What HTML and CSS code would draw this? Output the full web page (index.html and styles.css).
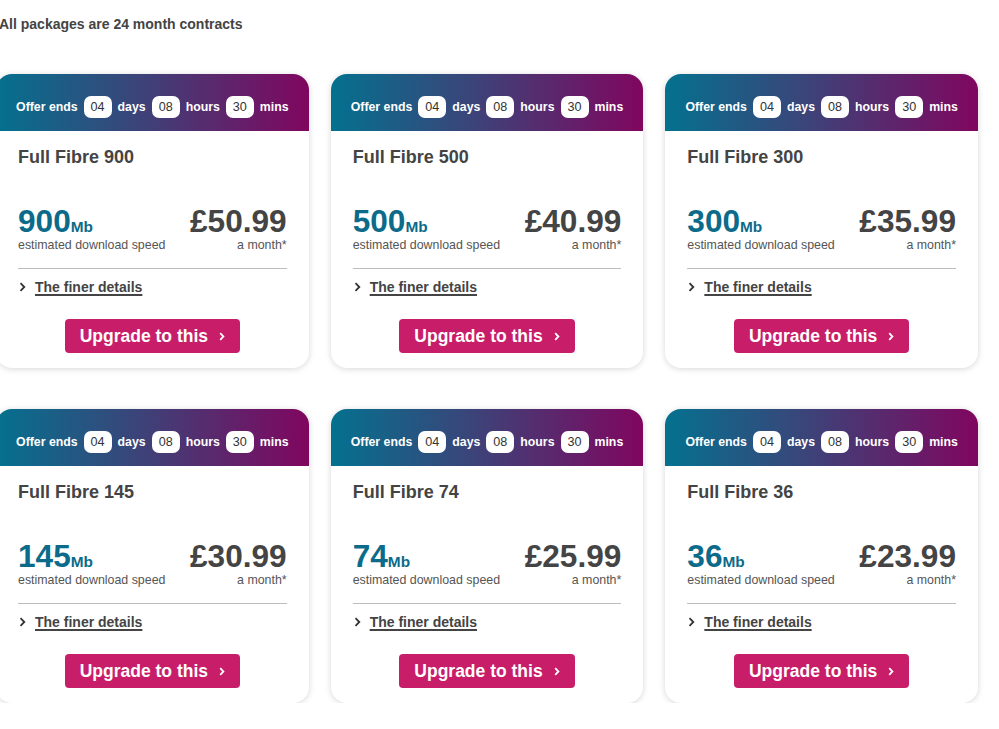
FILE: index.html
```html
<!DOCTYPE html>
<html lang="en">
<head>
<meta charset="utf-8">
<title>Full Fibre packages</title>
<link rel="stylesheet" href="styles.css">
</head>
<body>
<main class="page">
  <p class="intro">All packages are 24 month contracts</p>
  <div class="grid">

    <article class="card">
      <div class="offer"><span>Offer ends</span><span class="num">04</span><span>days</span><span class="num">08</span><span>hours</span><span class="num">30</span><span>mins</span></div>
      <div class="body">
        <h2 class="title">Full Fibre 900</h2>
        <div class="figures">
          <div class="speed"><div class="big">900<span class="unit">Mb</span></div><div class="sub">estimated download speed</div></div>
          <div class="price"><div class="big">£50.99</div><div class="sub">a month*</div></div>
        </div>
        <div class="divider"></div>
        <div class="details"><svg width="7" height="10" viewBox="0 0 7 10"><path d="M1.5 1.2 L5.3 5 L1.5 8.8" fill="none" stroke="#333" stroke-width="1.8"/></svg><a href="#">The finer details</a></div>
        <div class="btn-row"><button class="btn">Upgrade to this<svg width="6" height="9" viewBox="0 0 6 9"><path d="M1.2 1.2 L4.4 4.5 L1.2 7.8" fill="none" stroke="#fff" stroke-width="1.8"/></svg></button></div>
      </div>
    </article>

    <article class="card">
      <div class="offer"><span>Offer ends</span><span class="num">04</span><span>days</span><span class="num">08</span><span>hours</span><span class="num">30</span><span>mins</span></div>
      <div class="body">
        <h2 class="title">Full Fibre 500</h2>
        <div class="figures">
          <div class="speed"><div class="big">500<span class="unit">Mb</span></div><div class="sub">estimated download speed</div></div>
          <div class="price"><div class="big">£40.99</div><div class="sub">a month*</div></div>
        </div>
        <div class="divider"></div>
        <div class="details"><svg width="7" height="10" viewBox="0 0 7 10"><path d="M1.5 1.2 L5.3 5 L1.5 8.8" fill="none" stroke="#333" stroke-width="1.8"/></svg><a href="#">The finer details</a></div>
        <div class="btn-row"><button class="btn">Upgrade to this<svg width="6" height="9" viewBox="0 0 6 9"><path d="M1.2 1.2 L4.4 4.5 L1.2 7.8" fill="none" stroke="#fff" stroke-width="1.8"/></svg></button></div>
      </div>
    </article>

    <article class="card">
      <div class="offer"><span>Offer ends</span><span class="num">04</span><span>days</span><span class="num">08</span><span>hours</span><span class="num">30</span><span>mins</span></div>
      <div class="body">
        <h2 class="title">Full Fibre 300</h2>
        <div class="figures">
          <div class="speed"><div class="big">300<span class="unit">Mb</span></div><div class="sub">estimated download speed</div></div>
          <div class="price"><div class="big">£35.99</div><div class="sub">a month*</div></div>
        </div>
        <div class="divider"></div>
        <div class="details"><svg width="7" height="10" viewBox="0 0 7 10"><path d="M1.5 1.2 L5.3 5 L1.5 8.8" fill="none" stroke="#333" stroke-width="1.8"/></svg><a href="#">The finer details</a></div>
        <div class="btn-row"><button class="btn">Upgrade to this<svg width="6" height="9" viewBox="0 0 6 9"><path d="M1.2 1.2 L4.4 4.5 L1.2 7.8" fill="none" stroke="#fff" stroke-width="1.8"/></svg></button></div>
      </div>
    </article>

    <article class="card">
      <div class="offer"><span>Offer ends</span><span class="num">04</span><span>days</span><span class="num">08</span><span>hours</span><span class="num">30</span><span>mins</span></div>
      <div class="body">
        <h2 class="title">Full Fibre 145</h2>
        <div class="figures">
          <div class="speed"><div class="big">145<span class="unit">Mb</span></div><div class="sub">estimated download speed</div></div>
          <div class="price"><div class="big">£30.99</div><div class="sub">a month*</div></div>
        </div>
        <div class="divider"></div>
        <div class="details"><svg width="7" height="10" viewBox="0 0 7 10"><path d="M1.5 1.2 L5.3 5 L1.5 8.8" fill="none" stroke="#333" stroke-width="1.8"/></svg><a href="#">The finer details</a></div>
        <div class="btn-row"><button class="btn">Upgrade to this<svg width="6" height="9" viewBox="0 0 6 9"><path d="M1.2 1.2 L4.4 4.5 L1.2 7.8" fill="none" stroke="#fff" stroke-width="1.8"/></svg></button></div>
      </div>
    </article>

    <article class="card">
      <div class="offer"><span>Offer ends</span><span class="num">04</span><span>days</span><span class="num">08</span><span>hours</span><span class="num">30</span><span>mins</span></div>
      <div class="body">
        <h2 class="title">Full Fibre 74</h2>
        <div class="figures">
          <div class="speed"><div class="big">74<span class="unit">Mb</span></div><div class="sub">estimated download speed</div></div>
          <div class="price"><div class="big">£25.99</div><div class="sub">a month*</div></div>
        </div>
        <div class="divider"></div>
        <div class="details"><svg width="7" height="10" viewBox="0 0 7 10"><path d="M1.5 1.2 L5.3 5 L1.5 8.8" fill="none" stroke="#333" stroke-width="1.8"/></svg><a href="#">The finer details</a></div>
        <div class="btn-row"><button class="btn">Upgrade to this<svg width="6" height="9" viewBox="0 0 6 9"><path d="M1.2 1.2 L4.4 4.5 L1.2 7.8" fill="none" stroke="#fff" stroke-width="1.8"/></svg></button></div>
      </div>
    </article>

    <article class="card">
      <div class="offer"><span>Offer ends</span><span class="num">04</span><span>days</span><span class="num">08</span><span>hours</span><span class="num">30</span><span>mins</span></div>
      <div class="body">
        <h2 class="title">Full Fibre 36</h2>
        <div class="figures">
          <div class="speed"><div class="big">36<span class="unit">Mb</span></div><div class="sub">estimated download speed</div></div>
          <div class="price"><div class="big">£23.99</div><div class="sub">a month*</div></div>
        </div>
        <div class="divider"></div>
        <div class="details"><svg width="7" height="10" viewBox="0 0 7 10"><path d="M1.5 1.2 L5.3 5 L1.5 8.8" fill="none" stroke="#333" stroke-width="1.8"/></svg><a href="#">The finer details</a></div>
        <div class="btn-row"><button class="btn">Upgrade to this<svg width="6" height="9" viewBox="0 0 6 9"><path d="M1.2 1.2 L4.4 4.5 L1.2 7.8" fill="none" stroke="#fff" stroke-width="1.8"/></svg></button></div>
      </div>
    </article>

  </div>
</main>
</body>
</html>
```

FILE: styles.css
```css
body {
  margin: 0;
  background: #fff;
  color: #444;
  font-family: "Liberation Sans", Arial, sans-serif;
}

.page {
  margin-left: -4px;
  width: 982px;
  padding-top: 15px;
}

.intro {
  margin: 0 0 41px 3px;
  font-size: 14px;
  line-height: 18px;
  font-weight: bold;
  color: #444;
}

.grid {
  display: grid;
  grid-template-columns: repeat(3, 1fr);
  column-gap: 22px;
  row-gap: 41px;
}

.card {
  background: #fff;
  border-radius: 16px;
  overflow: hidden;
  box-shadow: 0 1px 6px rgba(0, 0, 0, 0.16);
}

.offer {
  display: flex;
  justify-content: center;
  align-items: center;
  gap: 6px;
  padding: 22px 10px 13px;
  background: linear-gradient(90deg, #04718f 0%, #3b4479 45%, #80065f 100%);
  color: #fff;
  font-weight: bold;
  font-size: 12.3px;
}

.num {
  background: #fff;
  color: #333;
  font-weight: normal;
  font-size: 12.6px;
  height: 22px;
  line-height: 22px;
  padding: 0 7px;
  border-radius: 7px;
}

.body {
  padding: 15px 22px 15px;
}

.title {
  margin: 0;
  font-size: 18px;
  line-height: 22px;
  font-weight: bold;
  color: #444;
}

.figures {
  display: flex;
  justify-content: space-between;
  margin-top: 37px;
}

.big {
  font-size: 31.6px;
  line-height: 32px;
  height: 32px;
  font-weight: bold;
  color: #444;
  white-space: nowrap;
}

.speed .big {
  color: #0c6b8a;
}

.unit {
  font-size: 15.4px;
  line-height: 1;
}

.sub {
  font-size: 12.4px;
  line-height: 15px;
  margin-top: 1px;
  color: #555;
}

.price {
  text-align: right;
}

.divider {
  margin-top: 15px;
  border-top: 1px solid #bdbdbd;
}

.details {
  display: flex;
  align-items: center;
  gap: 9px;
  margin-top: 9px;
  font-size: 14px;
  line-height: 18px;
  font-weight: bold;
}

.details svg {
  margin-left: 1px;
}

.details a {
  color: #444;
  text-decoration: underline;
  text-decoration-thickness: 2px;
  text-underline-offset: 2px;
}

.btn-row {
  display: flex;
  justify-content: center;
  margin-top: 23px;
}

.btn {
  display: flex;
  align-items: center;
  gap: 11px;
  height: 34px;
  padding: 0 15px;
  border: 0;
  border-radius: 4px;
  background: #c81e69;
  color: #fff;
  font-family: inherit;
  font-size: 17.5px;
  font-weight: bold;
}

.btn svg {
  margin-top: 1px;
}
```
